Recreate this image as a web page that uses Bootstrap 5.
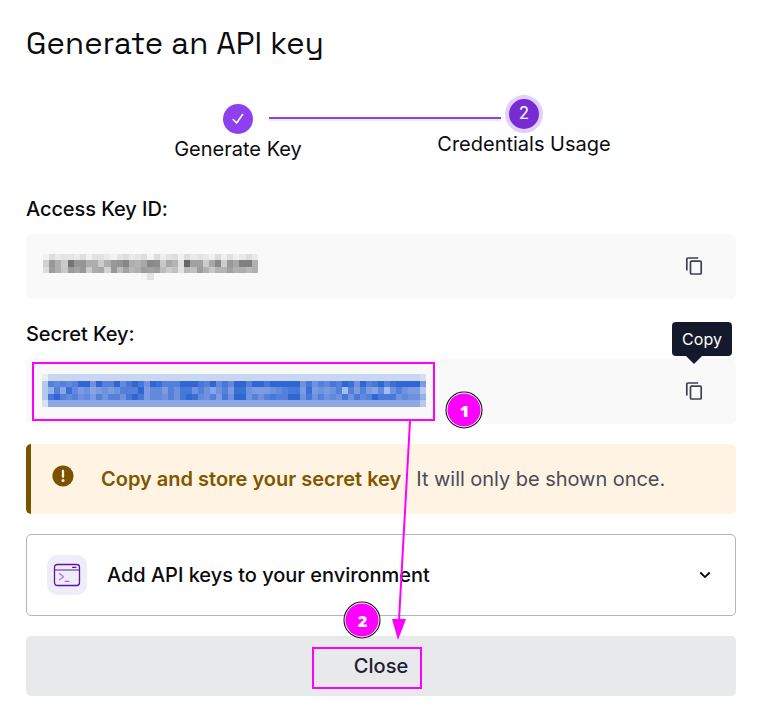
<!DOCTYPE html>
<html lang="en">
<head>
<meta charset="utf-8">
<meta name="viewport" content="width=device-width, initial-scale=1">
<title>Generate an API key</title>
<link href="https://cdn.jsdelivr.net/npm/bootstrap@5.3.0/dist/css/bootstrap.min.css" rel="stylesheet">
<style>
body{font-family:Inter,"Liberation Sans",sans-serif;font-size:20px;line-height:28px;color:#0b0b0e;background:#fff;height:723px;overflow:hidden}
.dialog-area{padding:23px 25px 27px 26px;height:723px}
h1{font-family:"Space Grotesk",Inter,sans-serif;font-size:31px;line-height:40px;font-weight:400;letter-spacing:.13px;color:#0b0b0e;white-space:nowrap}
.stepper{height:86px;margin-top:32px;padding-left:141px}
.step-item{white-space:nowrap}
.step-one{width:142px;padding-top:9px}
.step-one .step-text{margin-top:1px}
.step-two{width:190px;margin-left:-72px}
.step-two .step-text{margin-top:-3px}
.step-dot{width:30px;height:30px;background:#8e3fee;color:#fff;line-height:30px}
.step-current{width:38px;height:38px;border:4px solid #e2d0fb;background:#772bd3;font-size:17px;line-height:28px}
.step-rule{width:232px;height:4px;background:#ece9f0;border-top:2px solid #8e3fee;margin:22px 0 0 -40px}
.key-label{font-weight:500;line-height:28px;letter-spacing:-.08px}
.label-access{margin-top:14px}
.label-secret{margin-top:21px}
.key-field{height:65px;background:#f9f9f9;border-radius:5px;padding:0 32px 0 17px;margin-top:11px}
.field-secret{padding-left:16px}
.key-pixels{display:block}
.field-secret .key-pixels{margin-bottom:2px}
.copy-icon{margin-bottom:2px}
.copy-tip{left:672px;top:322px;width:60px;height:34px;border-radius:4px;background:#15192c;color:#fff;font-size:16px;line-height:34px}
.copy-tip::after{content:"";position:absolute;left:13px;top:33px;border:9px solid transparent;border-top-color:#15192c;border-bottom:0}
.notice{height:70px;background:#fff4e3;border-left:5px solid #7b5200;border-radius:5px;padding:0 0 1px 21px;color:#484b59;margin-top:20px}
.notice svg{margin-bottom:6px}
.notice strong{font-weight:600;color:#805600;margin-left:27px;margin-right:15px}
.notice span{letter-spacing:-.04px}
.env-panel{height:82px;border:1px solid #b4b4b9;border-radius:5px;margin-top:20px;padding:0 24px 0 20px;font-weight:500;letter-spacing:-.03px}
.env-icon{width:40px;height:40px;border-radius:10px;background:#f0edfb;margin-right:20px}
.close-btn{height:60px;margin-top:20px;background:#e8e9eb;border:0;border-radius:5px;color:#1d2031;font-size:20px;font-weight:500}
.overlay-marks{left:0;top:0;pointer-events:none}
</style>
<script src="https://cdn.jsdelivr.net/npm/bootstrap@5.3.0/dist/js/bootstrap.bundle.min.js"></script>
</head>
<body>
<main class="dialog-area position-relative d-flex flex-column">
  <h1 class="m-0">Generate an API key</h1>
  <div class="stepper d-flex align-items-start flex-shrink-0">
    <div class="step-item step-one d-flex flex-column align-items-center flex-shrink-0">
      <span class="step-dot rounded-circle d-flex align-items-center justify-content-center">
        <svg width="14" height="14" viewBox="0 0 14 14" fill="none" stroke="#fff" stroke-width="1.6" stroke-linecap="round" stroke-linejoin="round"><path d="M2.2 7.5 5.6 11 11.6 2.5"/></svg>
      </span>
      <span class="step-text">Generate Key</span>
    </div>
    <div class="step-rule flex-shrink-0"></div>
    <div class="step-item step-two d-flex flex-column align-items-center flex-shrink-0">
      <span class="step-dot step-current rounded-circle text-center">2</span>
      <span class="step-text">Credentials Usage</span>
    </div>
  </div>
  <div class="key-label label-access">Access Key ID:</div>
  <div class="key-field d-flex align-items-center justify-content-between flex-shrink-0">
    <svg class="key-pixels" id="access" width="216" height="26"></svg>
    <svg class="copy-icon" width="20" height="20" viewBox="0 0 20 20" fill="none" stroke="#3d4051" stroke-width="1.7"><path d="M2.8 14.5V3.2Q2.8 2 4 2h10.2"/><rect x="6.5" y="5.2" width="10.7" height="12.8" rx="1"/></svg>
  </div>
  <div class="key-label label-secret">Secret Key:</div>
  <div class="key-field field-secret d-flex align-items-center justify-content-between flex-shrink-0">
    <svg class="key-pixels" id="secret" width="384" height="33"></svg>
    <svg class="copy-icon" width="20" height="20" viewBox="0 0 20 20" fill="none" stroke="#3d4051" stroke-width="1.7"><path d="M2.8 14.5V3.2Q2.8 2 4 2h10.2"/><rect x="6.5" y="5.2" width="10.7" height="12.8" rx="1"/></svg>
  </div>
  <div class="notice d-flex align-items-center flex-shrink-0">
    <svg width="22" height="22" viewBox="0 0 22 22"><circle cx="11" cy="11" r="10.6" fill="#7b5200"/><path d="M11 6v5.8" stroke="#fff4e3" stroke-width="2.3" stroke-linecap="round"/><circle cx="11" cy="15.5" r="1.5" fill="#fff4e3"/></svg>
    <strong>Copy and store your secret key</strong><span>It will only be shown once.</span>
  </div>
  <div class="env-panel d-flex align-items-center flex-shrink-0">
    <span class="env-icon d-flex align-items-center justify-content-center">
      <svg width="28" height="24" viewBox="0 0 28 24" fill="none" stroke-linecap="round" stroke-linejoin="round"><rect x="1.5" y="1.5" width="25" height="21" rx="2.8" stroke="#5a189a" stroke-width="1.3"/><path d="M1.5 7h25M19.5 4.3h3.5" stroke="#5a189a" stroke-width="1.2"/><path d="m6.5 10.5 4 3.2-4 3.2M12 18.3h4" stroke="#a66cff" stroke-width="1.2"/></svg>
    </span>
    <span>Add API keys to your environment</span>
    <svg class="ms-auto" width="12" height="8" viewBox="0 0 12 8" fill="none" stroke="#000" stroke-width="1.8"><path d="m1.3 1.5 4.7 4.6 4.7-4.6"/></svg>
  </div>
  <button class="close-btn w-100 p-0 flex-shrink-0" type="button">Close</button>
  <div class="copy-tip position-absolute text-center">Copy</div>
  <svg class="overlay-marks position-absolute" width="761" height="723" fill="none">
    <rect x="33" y="363" width="401" height="57" stroke="#f0f" stroke-width="2"/>
    <path d="M410 421 399 620" stroke="#f0f" stroke-width="2"/>
    <path d="M392 619h14l-8 21z" fill="#f0f"/>
    <rect x="313" y="648" width="108" height="40" stroke="#f0f" stroke-width="2"/>
    <g font-family="Open Sans, sans-serif" font-weight="800" font-size="16.5" text-anchor="middle">
      <circle cx="464" cy="410" r="18" fill="#fff" stroke="#111" stroke-width="1.1"/><circle cx="464" cy="410" r="16.6" fill="#f0f"/><text x="464.5" y="416.5" fill="#fff">1</text>
      <circle cx="362" cy="620" r="18" fill="#fff" stroke="#111" stroke-width="1.1"/><circle cx="362" cy="620" r="16.6" fill="#f0f"/><text x="362.5" y="626.5" fill="#fff">2</text>
    </g>
  </svg>
</main>
<script>
// Obscured key values, drawn as rows of coloured cells.
function drawCells(id, rows, tops, cell, color) {
  const svg = document.getElementById(id);
  rows.forEach((row, y) => row.forEach((v, x) => {
    const r = document.createElementNS("http://www.w3.org/2000/svg", "rect");
    const left = Math.round(x * cell);
    r.setAttribute("x", left);
    r.setAttribute("y", tops[y]);
    r.setAttribute("width", Math.round((x + 1) * cell) - left);
    r.setAttribute("height", tops[y + 1] - tops[y]);
    r.setAttribute("fill", color(v));
    svg.append(r);
  }));
}
const gray = [
  "f2 dd ea e5 e5 ea dd f0 e2 e2 ea f3 e5 dd ea e5 dd f3 dd ee e2 dd f0 dd ea e5 e8 f0 dd f0 e0 f0 e8 dd ea",
  "d0 98 b0 ca 74 96 96 ae ae cc ae 98 94 86 ae b4 a8 88 8c c8 a8 b4 e0 66 a0 a0 cc a8 88 cc 98 a8 80 80 b0",
  "dd 9e b0 c8 9a a4 98 cc ae a8 d2 98 bc a2 b8 b0 9c a2 9c bc cc c0 e2 b8 c0 9e b0 c8 b4 b4 a0 b0 ae b8 b0",
  "f9 f9 f9 f9 f9 f9 f9 f9 f9 f9 f9 f9 f9 f9 f9 f9 f3 e2 f9 f9 f9 f9 f9 f9 f9 f9 f9 f9 f9 f9 f9 f9 f9 f9 f9"
].map(r => r.split(" "));
drawCells("access", gray, [0, 6, 13, 19, 26], 6.14, v => "#" + v + v + v);
const shades = ["#2f66d2","#3b6fd5","#4777d8","#5580da","#6189dc","#6e92df","#7b9be3","#88a6e7","#95b1ec","#a2bdef"];
const blue = [
  "e" + "t".repeat(62) + "f",
  "g" + "3434300503304202501333000230424" + "00300200000" + "52534230150320310000" + "6",
  "g" + "8371465765653330644635225357536" + "11566654322" + "61656539363674953566" + "g",
  "g" + "2034354635335202644535201453625" + "00535323300" + "52535452524302225455" + "8",
  "f" + "b".repeat(62) + "g"
].map(r => r.split(""));
const named = {e:"#e9edf5", f:"#d6dff3", g:"#b6c8ec", t:"#c8d6ef", b:"#8da8e2"};
drawCells("secret", blue, [0, 7, 13, 20, 26, 33], 6, v => named[v] || shades[+v]);
</script>
</body>
</html>
